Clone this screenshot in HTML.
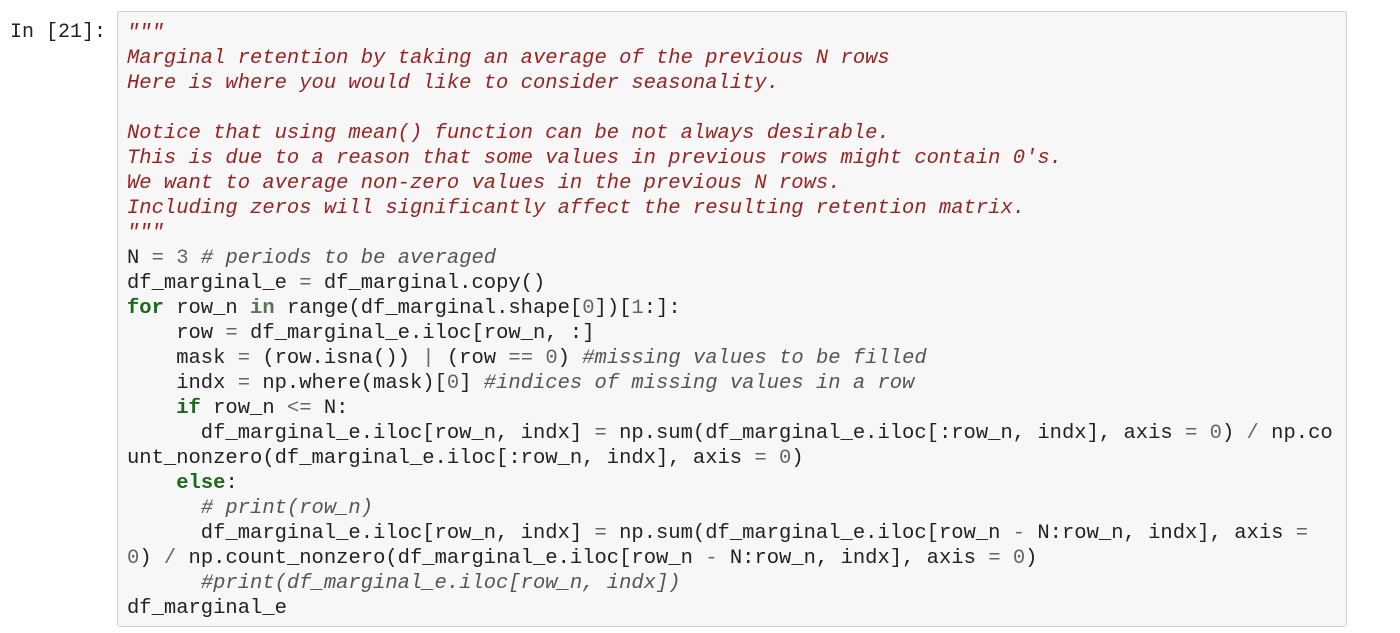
<!DOCTYPE html>
<html><head><meta charset="utf-8"><style>
body{margin:0;background:#fff;width:1400px;height:633px;overflow:hidden;font-family:"Liberation Mono",monospace;font-size:20.5px}
.p{position:absolute;left:10px;top:20px;line-height:25px;color:#222;white-space:pre;font-size:20px}
.box{position:absolute;left:117px;top:11px;width:1228px;height:614px;background:#f7f7f7;border:1px solid #cfcfcf;border-radius:3px}
pre{margin:0;position:absolute;left:9px;top:9px;font:inherit;line-height:25px;color:#222}
.s{color:#9a2222;font-style:italic}
.c{color:#555;font-style:italic}
.k{color:#1a6a1a;font-weight:bold}
.o{color:#666}
.ow{color:#557755;font-weight:bold}
.n{color:#666}
</style></head><body>
<div class="p">In [21]:</div>
<div class="box"><pre><span class="s">"""
Marginal retention by taking an average of the previous N rows
Here is where you would like to consider seasonality.

Notice that using mean() function can be not always desirable.
This is due to a reason that some values in previous rows might contain 0's.
We want to average non-zero values in the previous N rows.
Including zeros will significantly affect the resulting retention matrix.
"""</span>
N <span class="o">=</span> <span class="n">3</span> <span class="c"># periods to be averaged</span>
df_marginal_e <span class="o">=</span> df_marginal.copy()
<span class="k">for</span> row_n <span class="ow">in</span> range(df_marginal.shape[<span class="n">0</span>])[<span class="n">1</span>:]:
    row <span class="o">=</span> df_marginal_e.iloc[row_n, :]
    mask <span class="o">=</span> (row.isna()) <span class="o">|</span> (row <span class="o">==</span> <span class="n">0</span>) <span class="c">#missing values to be filled</span>
    indx <span class="o">=</span> np.where(mask)[<span class="n">0</span>] <span class="c">#indices of missing values in a row</span>
    <span class="k">if</span> row_n <span class="o">&lt;=</span> N:
      df_marginal_e.iloc[row_n, indx] <span class="o">=</span> np.sum(df_marginal_e.iloc[:row_n, indx], axis <span class="o">=</span> <span class="n">0</span>) <span class="o">/</span> np.co
unt_nonzero(df_marginal_e.iloc[:row_n, indx], axis <span class="o">=</span> <span class="n">0</span>)
    <span class="k">else</span>:
      <span class="c"># print(row_n)</span>
      df_marginal_e.iloc[row_n, indx] <span class="o">=</span> np.sum(df_marginal_e.iloc[row_n <span class="o">-</span> N:row_n, indx], axis <span class="o">=</span>
<span class="n">0</span>) <span class="o">/</span> np.count_nonzero(df_marginal_e.iloc[row_n <span class="o">-</span> N:row_n, indx], axis <span class="o">=</span> <span class="n">0</span>)
      <span class="c">#print(df_marginal_e.iloc[row_n, indx])</span>
df_marginal_e</pre></div>
</body></html>
